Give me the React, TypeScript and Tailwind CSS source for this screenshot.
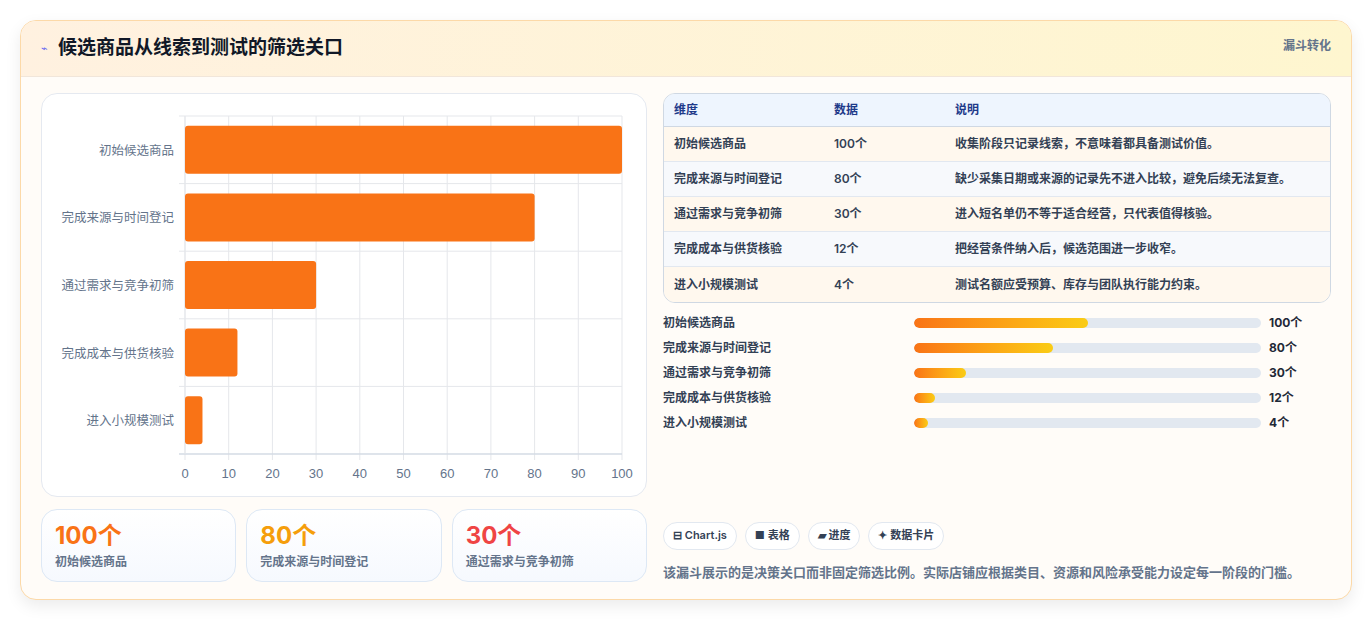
import React from "react";

const stages = [
  { n: "初始候选商品", v: 100, d: "收集阶段只记录线索，不意味着都具备测试价值。" },
  { n: "完成来源与时间登记", v: 80, d: "缺少采集日期或来源的记录先不进入比较，避免后续无法复查。" },
  { n: "通过需求与竞争初筛", v: 30, d: "进入短名单仍不等于适合经营，只代表值得核验。" },
  { n: "完成成本与供货核验", v: 12, d: "把经营条件纳入后，候选范围进一步收窄。" },
  { n: "进入小规模测试", v: 4, d: "测试名额应受预算、库存与团队执行能力约束。" },
];

function Chart() {
  const W = 606, H = 402;
  const x0 = 143, x1 = 580, y0 = 22, y1 = 360;
  const band = (y1 - y0) / 5;
  return (
    <svg width={W} height={H} className="block">
      {Array.from({ length: 11 }).map((_, i) => {
        const x = x0 + ((x1 - x0) * i) / 10;
        return (
          <g key={i}>
            <line x1={x} y1={y0} x2={x} y2={y1 + 6} stroke="#e5e7eb" />
            <text x={x} y={384} textAnchor="middle" fontSize="13" fill="#64748b" fontFamily="Liberation Sans, sans-serif">{i * 10}</text>
          </g>
        );
      })}
      {Array.from({ length: 6 }).map((_, i) => (
        <line key={i} x1={x0 - 6} x2={x1} y1={y0 + band * i} y2={y0 + band * i} stroke="#e5e7eb" />
      ))}
      <line x1={x0 - 6} x2={x1} y1={y1} y2={y1} stroke="#cbd5e1" />
      <line x1={x0} x2={x0} y1={y0} y2={y1} stroke="#e5e7eb" />
      {stages.map((s, i) => {
        const cy = y0 + band * i + band / 2;
        return (
          <g key={s.n}>
            <rect x={x0} y={cy - 24} width={((x1 - x0) * s.v) / 100} height={48} rx={3} fill="#f97316" />
            <text x={x0 - 11} y={cy + 5} textAnchor="end" fontSize="12.5" fill="#64748b" fontFamily="Noto Sans CJK SC, sans-serif">{s.n}</text>
          </g>
        );
      })}
    </svg>
  );
}

export default function App() {
  return (
    <div className="w-[1372px] h-[620px] bg-white p-5 pb-0" style={{ fontFamily: "Inter, 'Noto Sans CJK SC', sans-serif" }}>
      <div className="h-[580px] rounded-2xl border border-[#fcd9a8] bg-[#fffcf8] shadow-[0_6px_16px_rgba(0,0,0,0.08)] overflow-hidden flex flex-col">
        <div className="h-[56px] shrink-0 bg-gradient-to-r from-[#fff1e0] to-[#fef6cf] border-b border-[#f1e6da] flex items-center justify-between px-5">
          <div className="flex items-center gap-2.5">
            <span className="text-[11px] text-[#6366f1]">⌁</span>
            <span className="text-[19px] font-bold text-[#111827]">候选商品从线索到测试的筛选关口</span>
          </div>
          <span className="text-[12px] font-bold text-[#64748b] self-start mt-[16px]">漏斗转化</span>
        </div>
        <div className="flex-1 flex gap-4 px-5 pt-4 pb-[18px]">
          <div className="w-[606px] flex flex-col gap-3">
            <div className="h-[404px] bg-white rounded-2xl border border-[#e5e9f0]">
              <Chart />
            </div>
            <div className="grid grid-cols-3 gap-[10px]">
              {[
                ["100个", "text-[#f97316]", stages[0].n],
                ["80个", "text-[#f59e0b]", stages[1].n],
                ["30个", "text-[#ef4444]", stages[2].n],
              ].map(([v, c, n]) => (
                <div key={n} className="h-[73px] rounded-2xl border border-[#dde8f5] bg-gradient-to-b from-white to-[#f6f9fe] px-[13px] pt-[10px]">
                  <div className={`text-[24px] font-bold leading-[32px] ${c}`}>{v}</div>
                  <div className="text-[12px] font-semibold text-[#64748b] mt-[1px]">{n}</div>
                </div>
              ))}
            </div>
          </div>
          <div className="flex-1 flex flex-col">
            <div className="rounded-xl border border-[#cfd8e3] overflow-hidden text-[12px]">
              <div className="grid grid-cols-[160px_121px_1fr] h-[33px] items-center bg-[#eef5fe] border-b border-[#cfd8e3] px-[10px] font-semibold text-[#1e3a8a]">
                <span>维度</span><span>数据</span><span>说明</span>
              </div>
              {stages.map((s, i) => (
                <div key={s.n} className={`grid grid-cols-[160px_121px_1fr] h-[35px] items-center px-[10px] font-semibold text-[#334155] ${i < 4 ? "border-b border-[#e2e8f0]" : ""} ${i % 2 === 0 ? "bg-[#fff8ee]" : "bg-[#f7f9fc]"}`}>
                  <span>{s.n}</span><span>{s.v}个</span><span>{s.d}</span>
                </div>
              ))}
            </div>
            <div className="flex flex-col gap-[9px] mt-[12px]">
              {stages.map((s) => (
                <div key={s.n} className="flex items-center h-[16px] text-[12px] font-semibold text-[#334155]">
                  <span className="w-[251px]">{s.n}</span>
                  <div className="w-[347px] h-[10px] rounded-full bg-[#e2e8f0] overflow-hidden">
                    <div className="h-full rounded-full bg-gradient-to-r from-[#f97316] to-[#facc15]" style={{ width: `${Math.max(s.v / 2, 4)}%` }} />
                  </div>
                  <span className="ml-2 font-bold text-[#1f2937]">{s.v}个</span>
                </div>
              ))}
            </div>
            <div className="flex-1" />
            <div className="flex gap-2 text-[11px] font-semibold text-[#334155]">
              {["⊟ Chart.js", "■ 表格", "▰ 进度", "✦ 数据卡片"].map((t) => (
                <span key={t} className="h-[28px] px-[9px] rounded-full border border-[#e2e8f0] bg-white flex items-center">{t}</span>
              ))}
            </div>
            <div className="mt-[13px] text-[13px] font-semibold text-[#64748b]">该漏斗展示的是决策关口而非固定筛选比例。实际店铺应根据类目、资源和风险承受能力设定每一阶段的门槛。</div>
          </div>
        </div>
      </div>
    </div>
  );
}
